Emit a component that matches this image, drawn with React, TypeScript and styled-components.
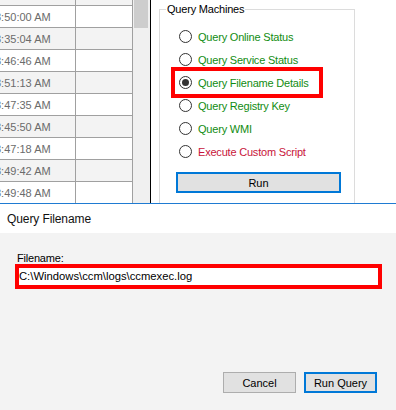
import React from 'react';
import styled, { createGlobalStyle } from 'styled-components';

const GlobalStyle = createGlobalStyle`
  * {
    box-sizing: border-box;
  }
  html,
  body {
    margin: 0;
    padding: 0;
    background: #ffffff;
  }
  body {
    font-family: 'Liberation Sans', Arial, sans-serif;
    font-size: 11px;
    color: #000000;
  }
`;

type Tone = 'ok' | 'danger';

// first row is only a sliver scrolled past the top edge, its text is out of view
const times = [
  '',
  '8:50:00 AM',
  '8:35:04 AM',
  '8:46:46 AM',
  '8:51:13 AM',
  '8:47:35 AM',
  '8:45:50 AM',
  '8:47:18 AM',
  '8:49:42 AM',
  '8:49:48 AM',
];

const options: { label: string; tone: Tone; checked?: boolean }[] = [
  { label: 'Query Online Status', tone: 'ok' },
  { label: 'Query Service Status', tone: 'ok' },
  { label: 'Query Filename Details', tone: 'ok', checked: true },
  { label: 'Query Registry Key', tone: 'ok' },
  { label: 'Query WMI', tone: 'ok' },
  { label: 'Execute Custom Script', tone: 'danger' },
];

const App: React.FC = () => {
  return (
    <>
      <GlobalStyle />
      <Screen>
        <TopArea>
          <Grid>
            {times.map((time, i) => (
              <GridRow key={i} $shaded={i % 2 === 0}>
                <TimeCell>{time}</TimeCell>
                <EmptyCell />
              </GridRow>
            ))}
          </Grid>
          <ScrollBar>
            <ScrollThumb />
          </ScrollBar>
          <SidePane>
            <GroupBox>
              <Legend>Query Machines</Legend>
              <OptionList>
                {options.map((option) => (
                  <OptionRow key={option.label} $highlight={!!option.checked}>
                    <Radio>{option.checked && <RadioDot />}</Radio>
                    <OptionLabel $tone={option.tone}>{option.label}</OptionLabel>
                  </OptionRow>
                ))}
              </OptionList>
              <RunButton>Run</RunButton>
            </GroupBox>
          </SidePane>
        </TopArea>
        <Dialog>
          <TitleBar>Query Filename</TitleBar>
          <DialogBody>
            <FieldLabel>Filename:</FieldLabel>
            <PathBox>C:\Windows\ccm\logs\ccmexec.log</PathBox>
            <ButtonRow>
              <DialogButton>Cancel</DialogButton>
              <DialogButton $primary>Run Query</DialogButton>
            </ButtonRow>
          </DialogBody>
        </Dialog>
      </Screen>
    </>
  );
};

export default App;

const Screen = styled.div`
  width: 396px;
  height: 410px;
  display: flex;
  flex-direction: column;
  overflow: hidden;
`;

const TopArea = styled.div`
  height: 204px;
  flex: none;
  display: flex;
  overflow: hidden;
  border-bottom: 1px solid #1f7bd2;
`;

const Grid = styled.div`
  width: 133px;
  flex: none;
  margin-top: -16px;
  display: flex;
  flex-direction: column;
`;

const GridRow = styled.div<{ $shaded: boolean }>`
  height: 22px;
  flex: none;
  display: flex;
  border-bottom: 1px solid #a0a0a0;
  background: ${(p) => (p.$shaded ? '#f3f3f3' : '#ffffff')};
`;

const TimeCell = styled.div`
  width: 76px;
  border-right: 1px solid #a0a0a0;
  padding-top: 2px;
  line-height: 19px;
  color: #6b6b6b;
  white-space: nowrap;
  overflow: hidden;
  text-indent: -5px;
`;

const EmptyCell = styled.div`
  width: 57px;
  border-right: 1px solid #a0a0a0;
`;

const ScrollBar = styled.div`
  width: 18px;
  flex: none;
  padding: 0 2px 0 1px;
  background: #f0f0f0;
  border-right: 1px solid #000000;
`;

const ScrollThumb = styled.div`
  height: 28px;
  background: #cdcdcd;
`;

const SidePane = styled.div`
  flex: 1;
  background: #ffffff;
  padding-left: 8px;
`;

const GroupBox = styled.fieldset`
  margin: 3px 0 0;
  width: 196px;
  height: 230px;
  min-width: 0;
  padding: 0 6px;
  border: 1px solid #dcdcdc;
`;

const Legend = styled.legend`
  padding: 0 1px;
  line-height: 13px;
  letter-spacing: -0.2px;
  color: #000000;
`;

const OptionList = styled.div`
  display: flex;
  flex-direction: column;
  align-items: flex-start;
  padding-top: 9px;
`;

const OptionRow = styled.div<{ $highlight: boolean }>`
  height: 23px;
  margin-left: 9px;
  display: flex;
  align-items: center;
  padding: 0 ${(p) => (p.$highlight ? '10px' : '4px')} 0 4px;
  outline: ${(p) => (p.$highlight ? '4px solid #ff0000' : 'none')};
`;

const Radio = styled.span`
  width: 13px;
  height: 13px;
  flex: none;
  border-radius: 50%;
  border: 1px solid #333333;
  background: #ffffff;
  display: flex;
  align-items: center;
  justify-content: center;
`;

const RadioDot = styled.span`
  width: 7px;
  height: 7px;
  border-radius: 50%;
  background: #333333;
`;

const OptionLabel = styled.span<{ $tone: Tone }>`
  margin-left: 6px;
  letter-spacing: -0.2px;
  white-space: nowrap;
  color: ${(p) => (p.$tone === 'danger' ? '#c8143a' : '#118c11')};
`;

const RunButton = styled.button`
  display: block;
  margin: 9px 0 0 10px;
  width: 165px;
  height: 21px;
  padding: 0;
  border: 2px solid #0078d7;
  background: #e1e1e1;
  font-family: inherit;
  font-size: 11px;
  color: #000000;
`;

const Dialog = styled.div`
  flex: 1;
  display: flex;
  flex-direction: column;
`;

const TitleBar = styled.div`
  height: 29px;
  flex: none;
  padding: 8px 0 0 7px;
  background: #ffffff;
  font-size: 12px;
  line-height: 14px;
  letter-spacing: -0.1px;
  color: #111111;
`;

const DialogBody = styled.div`
  flex: 1;
  display: flex;
  flex-direction: column;
  padding: 19px 14px 17px 15px;
  background: #f3f3f3;
`;

const FieldLabel = styled.label`
  padding-left: 2px;
  line-height: 12px;
  letter-spacing: -0.2px;
`;

const PathBox = styled.div`
  height: 25px;
  border: 4px solid #ff0000;
  background: #ffffff;
  font-size: 11.25px;
  line-height: 17px;
  white-space: nowrap;
  color: #000000;
`;

const ButtonRow = styled.div`
  margin-top: auto;
  display: flex;
  justify-content: flex-end;
  gap: 8px;
  padding-right: 5px;
`;

const DialogButton = styled.button<{ $primary?: boolean }>`
  width: 73px;
  height: 21px;
  padding: 0;
  border: ${(p) => (p.$primary ? '2px solid #0078d7' : '1px solid #adadad')};
  background: #e1e1e1;
  font-family: inherit;
  font-size: 11px;
  color: #000000;
`;
